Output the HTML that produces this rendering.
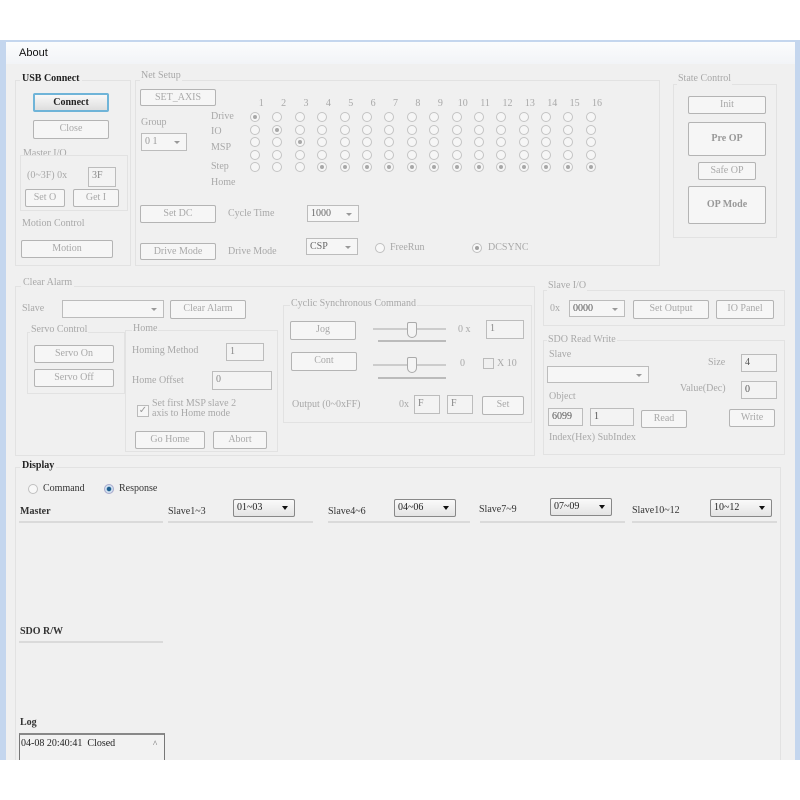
<!DOCTYPE html>
<html><head><meta charset="utf-8"><style>
*{margin:0;padding:0;box-sizing:border-box}
body{width:800px;height:800px;background:#fff;position:relative;overflow:hidden;font-family:"Liberation Serif",serif;font-size:10px;color:#a8a8a8}
div,span{position:absolute}
.t{white-space:nowrap;line-height:12px}
.k{color:#222;font-weight:bold}
.b{border:1px solid #b4b4b4;background:#f6f6f6;border-radius:2px;text-align:center;color:#a8a8a8;line-height:15px}
.tb{border:1px solid #bcbcbc;background:#f3f3f3;padding-left:3px;color:#888;line-height:15px}
.cb{border:1px solid #bcbcbc;background:#f6f6f6;padding-left:3px;color:#999;line-height:15px}
.cb:after{content:"";position:absolute;right:6px;top:7px;border:3px solid transparent;border-top:3px solid #999}
.cbd{border:1px solid #888;background:linear-gradient(#fafafa,#e4e4e4);padding-left:3px;color:#222;line-height:15px;border-radius:2px}
.cbd:after{content:"";position:absolute;right:6px;top:6px;border:3.5px solid transparent;border-top:4px solid #111}
.g{border:1px solid #e2e2e2}
.r{width:10px;height:10px;border:1px solid #c0c0c0;border-radius:50%;background:#f8f8f8}
.r.c:after{content:"";position:absolute;left:2px;top:2px;width:4px;height:4px;border-radius:50%;background:#a0a0a0}
.grid{display:grid;grid-template-columns:repeat(16,22.4px)}
.grid i{width:10px;height:10px;border:1px solid #c4c4c4;border-radius:50%;position:relative;display:block;margin-bottom:2.6px;background:#f6f6f6}
.grid i.c:after{content:"";position:absolute;left:2px;top:2px;width:4px;height:4px;border-radius:50%;background:#a8a8a8}
.p{background:#f0f0f0;border-top:2px solid #dadada}
</style></head><body>
<div style="left:0;top:40px;width:800px;height:720px;background:#c4d6ee"></div>
<div style="left:6px;top:42px;width:789px;height:718px;background:#f0f0f0"></div>
<div style="left:6px;top:42px;width:789px;height:22px;background:linear-gradient(#fbfcfd,#f2f4f7)"></div>
<div class="t" style="left:19px;top:47px;font-family:'Liberation Sans',sans-serif;font-size:11px;color:#111">About</div>

<!-- left column -->
<div class="g" style="left:15px;top:80px;width:116px;height:186px"></div>
<div class="t k" style="left:20px;top:73px;background:#f0f0f0;padding:0 2px">USB Connect</div>
<div class="b" style="left:33px;top:93px;width:76px;height:19px;border:2px solid #6fb4d8;color:#222;font-weight:bold;background:linear-gradient(#f8f8f8,#dedede)">Connect</div>
<div class="b" style="left:33px;top:120px;width:76px;height:19px">Close</div>
<div class="t" style="left:22px;top:148px;background:#f0f0f0;padding:0 1px">Master I/O</div>
<div class="g" style="left:20px;top:155px;width:108px;height:56px"></div>
<div class="t" style="left:27px;top:170px">(0~3F) 0x</div>
<div class="tb" style="left:88px;top:167px;width:28px;height:20px">3F</div>
<div class="b" style="left:25px;top:189px;width:40px;height:18px">Set O</div>
<div class="b" style="left:73px;top:189px;width:46px;height:18px">Get I</div>
<div class="t" style="left:22px;top:218px">Motion Control</div>
<div class="b" style="left:21px;top:240px;width:92px;height:18px">Motion</div>

<!-- net setup -->
<div class="g" style="left:135px;top:80px;width:525px;height:186px"></div>
<div class="t" style="left:140px;top:70px;background:#f0f0f0;padding:0 1px">Net Setup</div>
<div class="b" style="left:140px;top:89px;width:76px;height:17px">SET_AXIS</div>
<div class="t" style="left:141px;top:117px">Group</div>
<div class="cb" style="left:141px;top:133px;width:46px;height:18px">0 1</div>
<div class="t" style="left:211px;top:111px">Drive</div>
<div class="t" style="left:211px;top:126px">IO</div>
<div class="t" style="left:211px;top:142px">MSP</div>
<div class="t" style="left:211px;top:161px">Step</div>
<div class="t" style="left:211px;top:177px">Home</div>
<div class="grid" style="left:250px;top:98px;text-align:center;width:359px">
<b style="font-weight:normal">1</b><b style="font-weight:normal">2</b><b style="font-weight:normal">3</b><b style="font-weight:normal">4</b><b style="font-weight:normal">5</b><b style="font-weight:normal">6</b><b style="font-weight:normal">7</b><b style="font-weight:normal">8</b><b style="font-weight:normal">9</b><b style="font-weight:normal">10</b><b style="font-weight:normal">11</b><b style="font-weight:normal">12</b><b style="font-weight:normal">13</b><b style="font-weight:normal">14</b><b style="font-weight:normal">15</b><b style="font-weight:normal">16</b>
</div>
<div class="grid" style="left:250px;top:112px">
<i class="c"></i><i></i><i></i><i></i><i></i><i></i><i></i><i></i><i></i><i></i><i></i><i></i><i></i><i></i><i></i><i></i>
<i></i><i class="c"></i><i></i><i></i><i></i><i></i><i></i><i></i><i></i><i></i><i></i><i></i><i></i><i></i><i></i><i></i>
<i></i><i></i><i class="c"></i><i></i><i></i><i></i><i></i><i></i><i></i><i></i><i></i><i></i><i></i><i></i><i></i><i></i>
<i></i><i></i><i></i><i></i><i></i><i></i><i></i><i></i><i></i><i></i><i></i><i></i><i></i><i></i><i></i><i></i>
<i></i><i></i><i></i><i class="c"></i><i class="c"></i><i class="c"></i><i class="c"></i><i class="c"></i><i class="c"></i><i class="c"></i><i class="c"></i><i class="c"></i><i class="c"></i><i class="c"></i><i class="c"></i><i class="c"></i>
</div>
<div class="b" style="left:140px;top:205px;width:76px;height:18px">Set DC</div>
<div class="t" style="left:228px;top:208px">Cycle Time</div>
<div class="cb" style="left:307px;top:205px;width:52px;height:17px;color:#666">1000</div>
<div class="b" style="left:140px;top:243px;width:76px;height:17px">Drive Mode</div>
<div class="t" style="left:228px;top:246px">Drive Mode</div>
<div class="cb" style="left:306px;top:238px;width:52px;height:17px;color:#666">CSP</div>
<div class="r" style="left:375px;top:243px"></div>
<div class="t" style="left:390px;top:242px">FreeRun</div>
<div class="r c" style="left:472px;top:243px"></div>
<div class="t" style="left:488px;top:242px">DCSYNC</div>

<!-- state control -->
<div class="g" style="left:673px;top:84px;width:104px;height:154px"></div>
<div class="t" style="left:677px;top:73px;background:#f0f0f0;padding:0 1px">State Control</div>
<div class="b" style="left:688px;top:96px;width:78px;height:18px">Init</div>
<div class="b" style="left:688px;top:122px;width:78px;height:34px;line-height:31px;font-weight:bold;color:#999">Pre OP</div>
<div class="b" style="left:698px;top:162px;width:58px;height:18px">Safe OP</div>
<div class="b" style="left:688px;top:186px;width:78px;height:38px;line-height:35px;font-weight:bold;color:#999">OP Mode</div>

<!-- clear alarm -->
<div class="g" style="left:15px;top:286px;width:520px;height:170px"></div>
<div class="t" style="left:21px;top:277px;background:#f0f0f0;padding:0 2px">Clear Alarm</div>
<div class="t" style="left:22px;top:303px">Slave</div>
<div class="cb" style="left:62px;top:300px;width:102px;height:18px"></div>
<div class="b" style="left:170px;top:300px;width:76px;height:19px">Clear Alarm</div>
<div class="g" style="left:27px;top:332px;width:98px;height:62px"></div>
<div class="t" style="left:30px;top:324px;background:#f0f0f0;padding:0 1px">Servo Control</div>
<div class="b" style="left:34px;top:345px;width:80px;height:18px">Servo On</div>
<div class="b" style="left:34px;top:369px;width:80px;height:18px">Servo Off</div>
<div class="g" style="left:125px;top:330px;width:153px;height:122px"></div>
<div class="t" style="left:132px;top:323px;background:#f0f0f0;padding:0 1px">Home</div>
<div class="t" style="left:132px;top:345px">Homing Method</div>
<div class="tb" style="left:226px;top:343px;width:38px;height:18px">1</div>
<div class="t" style="left:132px;top:375px">Home Offset</div>
<div class="tb" style="left:212px;top:371px;width:60px;height:19px">0</div>
<div style="left:137px;top:405px;width:12px;height:12px;border:1px solid #bbb;background:#f6f6f6;color:#999;font-size:10px;line-height:10px;text-align:center">✓</div>
<div class="t" style="left:152px;top:399px;line-height:10px">Set first MSP slave 2<br>axis to Home mode</div>
<div class="b" style="left:135px;top:431px;width:70px;height:18px">Go Home</div>
<div class="b" style="left:213px;top:431px;width:54px;height:18px">Abort</div>

<!-- cyclic -->
<div class="g" style="left:283px;top:305px;width:249px;height:118px"></div>
<div class="t" style="left:290px;top:298px;background:#f0f0f0;padding:0 1px">Cyclic Synchronous Command</div>
<div class="b" style="left:290px;top:321px;width:66px;height:19px">Jog</div>
<div style="left:373px;top:328px;width:73px;height:2px;background:#ccc"></div>
<div style="left:378px;top:340px;width:68px;height:2px;background:#bbb"></div>
<div style="left:407px;top:322px;width:10px;height:16px;border:1px solid #aaa;border-radius:2px 2px 5px 5px;background:#f4f4f4"></div>
<div class="t" style="left:458px;top:324px">0 x</div>
<div class="tb" style="left:486px;top:320px;width:38px;height:19px">1</div>
<div class="b" style="left:291px;top:352px;width:66px;height:19px">Cont</div>
<div style="left:373px;top:364px;width:73px;height:2px;background:#ccc"></div>
<div style="left:378px;top:377px;width:68px;height:2px;background:#bbb"></div>
<div style="left:407px;top:357px;width:10px;height:16px;border:1px solid #aaa;border-radius:2px 2px 5px 5px;background:#f4f4f4"></div>
<div class="t" style="left:460px;top:358px">0</div>
<div style="left:483px;top:358px;width:11px;height:11px;border:1px solid #bbb"></div>
<div class="t" style="left:497px;top:358px">X 10</div>
<div class="t" style="left:292px;top:399px">Output (0~0xFF)</div>
<div class="t" style="left:399px;top:399px">0x</div>
<div class="tb" style="left:414px;top:395px;width:26px;height:19px">F</div>
<div class="tb" style="left:447px;top:395px;width:26px;height:19px">F</div>
<div class="b" style="left:482px;top:396px;width:42px;height:19px">Set</div>

<!-- slave io -->
<div class="g" style="left:543px;top:290px;width:242px;height:36px"></div>
<div class="t" style="left:547px;top:280px;background:#f0f0f0;padding:0 1px">Slave I/O</div>
<div class="t" style="left:550px;top:303px">0x</div>
<div class="cb" style="left:569px;top:300px;width:56px;height:17px;color:#555">0000</div>
<div class="b" style="left:633px;top:300px;width:76px;height:19px">Set Output</div>
<div class="b" style="left:716px;top:300px;width:58px;height:19px">IO Panel</div>
<div class="g" style="left:543px;top:340px;width:242px;height:115px"></div>
<div class="t" style="left:547px;top:334px;background:#f0f0f0;padding:0 1px">SDO Read Write</div>
<div class="t" style="left:549px;top:349px">Slave</div>
<div class="cb" style="left:547px;top:366px;width:102px;height:17px"></div>
<div class="t" style="left:708px;top:357px">Size</div>
<div class="tb" style="left:741px;top:354px;width:36px;height:18px;color:#555">4</div>
<div class="t" style="left:680px;top:383px">Value(Dec)</div>
<div class="tb" style="left:741px;top:381px;width:36px;height:18px;color:#555">0</div>
<div class="t" style="left:549px;top:391px">Object</div>
<div class="tb" style="left:548px;top:408px;width:35px;height:18px;color:#555">6099</div>
<div class="tb" style="left:590px;top:408px;width:44px;height:18px;color:#555">1</div>
<div class="b" style="left:641px;top:410px;width:46px;height:18px">Read</div>
<div class="b" style="left:729px;top:409px;width:46px;height:18px">Write</div>
<div class="t" style="left:549px;top:432px">Index(Hex) SubIndex</div>

<!-- display -->
<div class="g" style="left:15px;top:467px;width:766px;height:295px"></div>
<div class="t k" style="left:20px;top:460px;background:#f0f0f0;padding:0 2px">Display</div>
<div class="r" style="left:28px;top:484px"></div>
<div class="t" style="left:43px;top:483px;color:#333">Command</div>
<div style="left:104px;top:484px;width:10px;height:10px;border-radius:50%;border:1px solid #aac;background:radial-gradient(#1f5f8f 35%,#cfe0f0 45%)"></div>
<div class="t" style="left:119px;top:483px;color:#333">Response</div>

<div class="t" style="left:20px;top:506px;color:#333;font-weight:bold">Master</div>
<div class="p" style="left:19px;top:521px;width:144px;height:104px"></div>
<div class="t" style="left:20px;top:626px;color:#333;font-weight:bold">SDO R/W</div>
<div class="p" style="left:19px;top:641px;width:144px;height:71px"></div>
<div class="t" style="left:20px;top:717px;color:#333;font-weight:bold">Log</div>
<div style="left:19px;top:733px;width:146px;height:27px;border:1px solid #777;border-top:2px solid #888;border-bottom:none;background:#f2f2f2"></div>
<div class="t" style="left:21px;top:738px;color:#222">04-08 20:40:41&nbsp;&nbsp;Closed</div>
<div class="t" style="left:153px;top:738px;color:#666;font-size:9px">^</div>

<div class="t" style="left:168px;top:506px;color:#333">Slave1~3</div>
<div class="cbd" style="left:233px;top:499px;width:62px;height:18px">01~03</div>
<div class="p" style="left:168px;top:521px;width:145px;height:240px"></div>
<div class="t" style="left:328px;top:506px;color:#333">Slave4~6</div>
<div class="cbd" style="left:394px;top:499px;width:62px;height:18px">04~06</div>
<div class="p" style="left:328px;top:521px;width:142px;height:240px"></div>
<div class="t" style="left:479px;top:504px;color:#333">Slave7~9</div>
<div class="cbd" style="left:550px;top:498px;width:62px;height:18px">07~09</div>
<div class="p" style="left:480px;top:521px;width:145px;height:240px"></div>
<div class="t" style="left:632px;top:505px;color:#333">Slave10~12</div>
<div class="cbd" style="left:710px;top:499px;width:62px;height:18px">10~12</div>
<div class="p" style="left:632px;top:521px;width:145px;height:240px"></div>
<div style="left:0;top:760px;width:800px;height:40px;background:#fff"></div>
</body></html>
